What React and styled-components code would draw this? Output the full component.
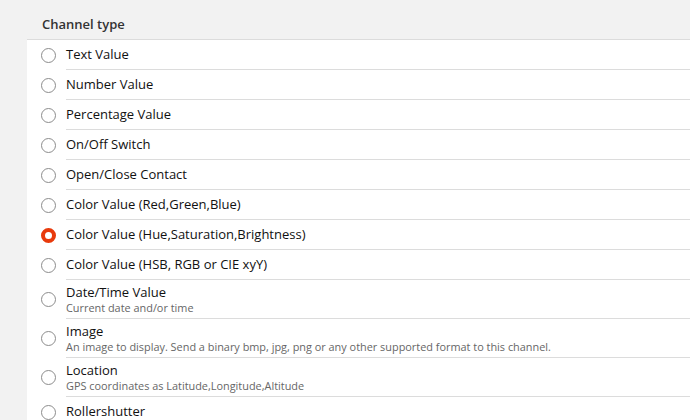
import React from 'react';
import styled, { createGlobalStyle } from 'styled-components';

const GlobalStyle = createGlobalStyle`
  body {
    margin: 0;
    background: #f2f2f2;
    font-family: "Open Sans", "Noto Sans", sans-serif;
    color: #111;
  }
`;

const Page = styled.div`
  padding-left: 27px;
  height: 420px;
  overflow: hidden;
`;

const Header = styled.div`
  height: 39px;
  display: flex;
  align-items: center;
  padding-left: 15px;
  padding-top: 8px;
  box-sizing: border-box;
  font-size: 13px;
  font-weight: 600;
  color: #333;
`;

const Panel = styled.div`
  background: #fff;
  border-top: 1px solid #dcdcdc;
`;

const Row = styled.div`
  display: flex;
  align-items: stretch;
`;

const RadioCell = styled.div`
  width: 39px;
  flex: none;
  display: flex;
  align-items: center;
  padding-left: 14px;
  box-sizing: border-box;
`;

const Radio = styled.span`
  width: 15px;
  height: 15px;
  box-sizing: border-box;
  border-radius: 50%;
  border: ${(props) => (props.checked ? '4.5px solid #e83a0c' : '1.2px solid #8c8c8c')};
  background: #fff;
`;

const Content = styled.div`
  flex: 1;
  min-height: ${(props) => (props.sub ? '38px' : '29px')};
  border-bottom: 1px solid #dcdcdc;
  display: flex;
  flex-direction: column;
  justify-content: center;
`;

const Title = styled.div`
  font-size: 13px;
  line-height: 17px;
  color: #111;
`;

const Sub = styled.div`
  font-size: 10.9px;
  line-height: 13px;
  color: #666;
`;

const types = [
  { label: 'Text Value' },
  { label: 'Number Value' },
  { label: 'Percentage Value' },
  { label: 'On/Off Switch' },
  { label: 'Open/Close Contact' },
  { label: 'Color Value (Red,Green,Blue)' },
  { label: 'Color Value (Hue,Saturation,Brightness)', checked: true },
  { label: 'Color Value (HSB, RGB or CIE xyY)' },
  { label: 'Date/Time Value', sub: 'Current date and/or time' },
  { label: 'Image', sub: 'An image to display. Send a binary bmp, jpg, png or any other supported format to this channel.' },
  { label: 'Location', sub: 'GPS coordinates as Latitude,Longitude,Altitude' },
  { label: 'Rollershutter' },
];

export default function App() {
  return (
    <Page>
      <GlobalStyle />
      <Header>Channel type</Header>
      <Panel>
        {types.map((t) => (
          <Row key={t.label}>
            <RadioCell>
              <Radio checked={t.checked} />
            </RadioCell>
            <Content sub={t.sub}>
              <Title>{t.label}</Title>
              {t.sub && <Sub>{t.sub}</Sub>}
            </Content>
          </Row>
        ))}
      </Panel>
    </Page>
  );
}
